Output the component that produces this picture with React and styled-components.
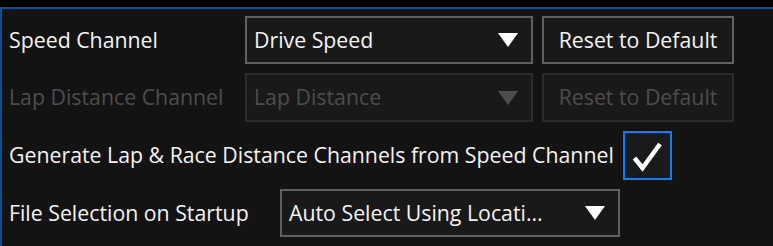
import React from "react";
import styled, { createGlobalStyle } from "styled-components";

const Global = createGlobalStyle`
  html, body {
    margin: 0;
    padding: 0;
    background: #000;
    width: 773px;
    height: 246px;
    overflow: hidden;
  }
`;

const Frame = styled.div`
  padding-top: 7px;
  width: 773px;
  height: 246px;
  box-sizing: border-box;
  background: #000;
`;

const Panel = styled.div`
  height: 239px;
  box-sizing: border-box;
  border-top: 2px solid #0e4f92;
  border-left: 2px solid #0e4f92;
  background: #131313;
  padding: 7px 0 0 7px;
  display: flex;
  flex-direction: column;
  gap: 9px;
  font-family: "Open Sans", "Noto Sans", sans-serif;
  font-size: 21.3px;
`;

const Row = styled.div`
  display: flex;
  align-items: center;
  height: ${({ h }) => h || 48}px;
`;

const Label = styled.div`
  width: ${({ w }) => (w ? `${w}px` : "auto")};
  margin-right: ${({ mr }) => mr || 0}px;
  padding-bottom: 2px;
  flex-shrink: 0;
  color: ${({ disabled }) => (disabled ? "#4d4d4d" : "#f3f3f3")};
  white-space: nowrap;
`;

const Select = styled.div`
  width: ${({ w }) => w}px;
  height: 100%;
  box-sizing: border-box;
  border: 2px solid ${({ disabled }) => (disabled ? "#2b2b2b" : "#606060")};
  background: #191919;
  color: ${({ disabled }) => (disabled ? "#4d4d4d" : "#f3f3f3")};
  display: flex;
  align-items: center;
  justify-content: space-between;
  padding: 0 13px 0 7px;
  white-space: nowrap;
`;

const Value = styled.span`
  padding-bottom: 2px;
`;

const Arrow = styled.span`
  width: 0;
  height: 0;
  border-left: 10.5px solid transparent;
  border-right: 10.5px solid transparent;
  border-top: 14px solid ${({ disabled }) => (disabled ? "#4d4d4d" : "#ffffff")};
`;

const Button = styled.div`
  width: 192px;
  height: 100%;
  margin-left: 9px;
  box-sizing: border-box;
  border: 2px solid ${({ disabled }) => (disabled ? "#2b2b2b" : "#606060")};
  background: #191919;
  color: ${({ disabled }) => (disabled ? "#4d4d4d" : "#f3f3f3")};
  display: flex;
  align-items: center;
  justify-content: center;
  padding-bottom: 2px;
`;

const Check = styled.div`
  width: 49px;
  height: 49px;
  box-sizing: border-box;
  border: 2px solid #0f7cf4;
  background: #1a1a1a;
  display: flex;
  align-items: center;
  justify-content: center;
`;

export default function App() {
  return (
    <Frame>
      <Global />
      <Panel>
        <Row>
          <Label w={236}>Speed Channel</Label>
          <Select w={288}>
            <Value>Drive Speed</Value>
            <Arrow />
          </Select>
          <Button>Reset to Default</Button>
        </Row>
        <Row h={49}>
          <Label w={236} disabled>
            Lap Distance Channel
          </Label>
          <Select w={288} disabled>
            <Value>Lap Distance</Value>
            <Arrow disabled />
          </Select>
          <Button disabled>Reset to Default</Button>
        </Row>
        <Row h={49}>
          <Label mr={9}>Generate Lap &amp; Race Distance Channels from Speed Channel</Label>
          <Check>
            <svg width="34" height="34" viewBox="0 0 34 34">
              <path
                d="M4.5 19 L12.5 29 L30 5"
                fill="none"
                stroke="#fff"
                strokeWidth="4.5"
                strokeLinecap="butt"
                strokeLinejoin="miter"
              />
            </svg>
          </Check>
        </Row>
        <Row>
          <Label w={271}>File Selection on Startup</Label>
          <Select w={340}>
            <Value>Auto Select Using Locati...</Value>
            <Arrow />
          </Select>
        </Row>
      </Panel>
    </Frame>
  );
}
